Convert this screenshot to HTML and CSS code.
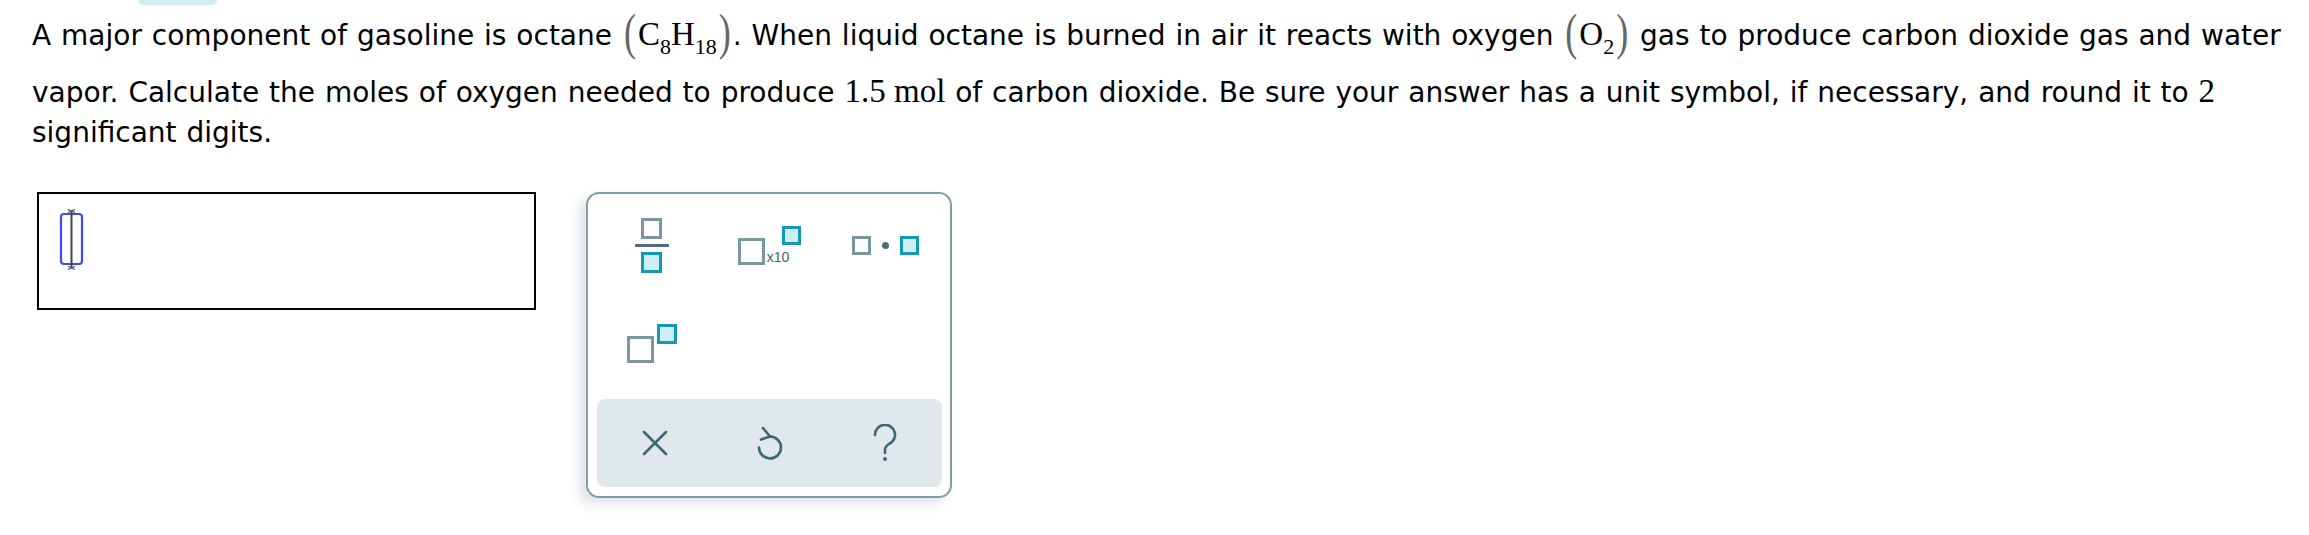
FILE: index.html
```html
<!DOCTYPE html>
<html>
<head>
<meta charset="utf-8">
<link rel="stylesheet" href="styles.css">
</head>
<body>
<div class="tab"></div>
<div class="question">
  <div class="line l1">A major component of gasoline is octane <span class="math"><span class="paren">(</span><span class="mi">C</span><sub class="sub">8</sub><span class="mi">H</span><sub class="sub">18</sub><span class="paren">)</span></span>. When liquid octane is burned in air it reacts with oxygen <span class="math"><span class="paren">(</span><span class="mi">O</span><sub class="sub">2</sub><span class="paren">)</span></span> gas to produce carbon dioxide gas and water</div>
  <div class="line">vapor. Calculate the moles of oxygen needed to produce <span class="num">1.5 mol</span> of carbon dioxide. Be sure your answer has a unit symbol, if necessary, and round it to <span class="num">2</span></div>
  <div class="line">significant digits.</div>
</div>
<div class="work">
  <div class="answer">
    <svg class="cursor" width="26" height="62" viewBox="0 0 26 62">
      <rect x="2" y="5" width="21" height="50" rx="3" fill="none" stroke="#3f49f5" stroke-width="2.2"/>
      <line x1="12.5" y1="2" x2="12.5" y2="59" stroke="#444" stroke-width="2"/>
      <path d="M9 0.5 L16 3.5 M16 0.5 L9 3.5 M9 57.5 L16 60.5 M16 57.5 L9 60.5" stroke="#555" stroke-width="1.3"/>
    </svg>
  </div>
  <div class="keypad">
    <div class="keys">
      <div class="key">
        <div class="frac">
          <span class="sq sq-g s21"></span>
          <span class="bar"></span>
          <span class="sq sq-t s21"></span>
        </div>
      </div>
      <div class="key">
        <div class="sci">
          <span class="sq sq-g s27"></span>
          <span class="x10">x10</span>
          <span class="sq sq-t s19 sup"></span>
        </div>
      </div>
      <div class="key">
        <div class="dotgrp">
          <span class="sq sq-g s19"></span>
          <span class="dot"></span>
          <span class="sq sq-t s19"></span>
        </div>
      </div>
      <div class="key">
        <div class="pow">
          <span class="sq sq-g s27"></span>
          <span class="sq sq-t s20 sup2"></span>
        </div>
      </div>
    </div>
    <div class="actions">
      <div class="act">
        <svg width="26" height="26" viewBox="0 0 26 26"><path d="M2 2 L24 24 M24 2 L2 24" stroke="#3e6673" stroke-width="2.6" stroke-linecap="round"/></svg>
      </div>
      <div class="act">
        <svg width="30" height="36" viewBox="0 0 30 36"><path d="M15 11.5 A11 11 0 1 1 4 22.5" fill="none" stroke="#3e6673" stroke-width="2.6" stroke-linecap="round"/><path d="M8 3 L15 11.5 L6 14.5" fill="none" stroke="#3e6673" stroke-width="2.6" stroke-linecap="round" stroke-linejoin="round"/></svg>
      </div>
      <div class="act">
        <svg width="26" height="38" viewBox="0 0 26 38"><path d="M3 11 A10 10 0 1 1 17 20 C14.5 21.5 13 23 13 26 L13 29" fill="none" stroke="#3e6673" stroke-width="2.6" stroke-linecap="round"/><circle cx="13" cy="35" r="1.9" fill="#3e6673"/></svg>
      </div>
    </div>
  </div>
</div>
</body>
</html>
```
FILE: styles.css
```css
html, body {
  margin: 0;
  padding: 0;
  background: #ffffff;
}
body {
  font-family: "DejaVu Sans", Verdana, sans-serif;
  color: #000;
  width: 2309px;
  height: 535px;
  overflow: hidden;
}
.tab {
  width: 79px;
  height: 5px;
  margin-left: 138px;
  background: #cdeef3;
  border-radius: 0 0 12px 12px;
}
.question {
  padding-left: 32px;
  font-size: 28px;
  word-spacing: 1px;
}
.line {
  white-space: nowrap;
  line-height: 40px;
  height: 40px;
}
.l1 {
  line-height: 62px;
  height: 68px;
}
.math {
  font-family: "Liberation Serif", "Times New Roman", serif;
  font-size: 33px;
  line-height: 1;
  white-space: nowrap;
  word-spacing: 0;
}
.paren {
  display: inline-block;
  color: #666;
  font-size: 36px;
  transform: translateY(-1px) scaleY(1.42);
  margin: 0 2px;
}
.sub {
  font-size: 22px;
  vertical-align: -9px;
  line-height: 1;
}
.num {
  font-family: "Liberation Serif", "Times New Roman", serif;
  font-size: 33px;
  line-height: 1;
  word-spacing: 0;
}
.work {
  display: flex;
  align-items: flex-start;
  margin-top: 39px;
  padding-left: 37px;
  gap: 50px;
}
.answer {
  box-sizing: border-box;
  width: 499px;
  height: 118px;
  border: 2px solid #000;
  padding: 15px 0 0 20px;
}
.cursor {
  display: block;
}
.keypad {
  box-sizing: border-box;
  width: 366px;
  height: 306px;
  border: 2px solid #809ea6;
  border-radius: 13px;
  background: #fff;
  box-shadow: -7px 6px 12px rgba(60, 80, 90, 0.16);
  padding: 2px 8px 9px 9px;
  display: flex;
  flex-direction: column;
}
.keys {
  display: grid;
  grid-template-columns: repeat(3, 115px);
  grid-auto-rows: 98px;
}
.key {
  display: flex;
  align-items: center;
  justify-content: center;
}
.sq {
  box-sizing: border-box;
  display: block;
  border: 3px solid #7a969e;
  background: #fff;
}
.sq-g {
  border-color: #7a969e;
  background: #fff;
}
.sq-t {
  border-color: #1399b3;
  background: #cdeef3;
}
.s19 { width: 19px; height: 19px; }
.s20 { width: 20px; height: 20px; }
.s21 { width: 21px; height: 21px; }
.s27 { width: 27px; height: 27px; }
.frac {
  display: flex;
  flex-direction: column;
  align-items: center;
  gap: 5px;
  margin-left: -6px;
}
.frac .bar {
  display: block;
  width: 34px;
  height: 3px;
  background: #4a6d78;
}
.sci {
  display: flex;
  align-items: flex-end;
  padding-top: 12px;
}
.x10 {
  font-family: "Liberation Sans", Arial, sans-serif;
  font-size: 14px;
  line-height: 14px;
  color: #3e6673;
  margin-left: 2px;
  margin-bottom: 1px;
}
.sci .sup {
  align-self: flex-start;
  margin-top: -12px;
  margin-left: -7px;
}
.dotgrp {
  display: flex;
  align-items: center;
  gap: 11px;
  margin-left: 2px;
}
.dot {
  display: block;
  width: 7px;
  height: 7px;
  border-radius: 50%;
  background: #4a6d78;
}
.pow {
  display: flex;
  align-items: flex-end;
  gap: 3px;
  margin-left: -5px;
  padding-top: 12px;
}
.pow .sup2 {
  align-self: flex-start;
  margin-top: -12px;
}
.actions {
  margin-top: auto;
  height: 88px;
  background: #e1e8eb;
  border-radius: 8px;
  display: grid;
  grid-template-columns: repeat(3, 1fr);
}
.act {
  display: flex;
  align-items: center;
  justify-content: center;
}
.act svg {
  display: block;
}
```
